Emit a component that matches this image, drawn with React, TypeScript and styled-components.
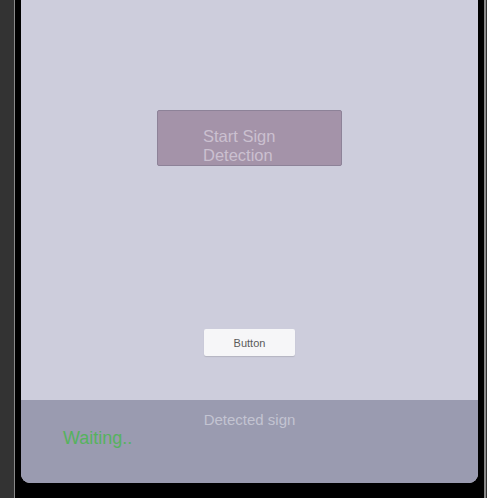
import React from 'react';
import styled, { createGlobalStyle } from 'styled-components';

const GlobalStyle = createGlobalStyle`
  html, body {
    margin: 0;
    padding: 0;
    background: #333333;
    font-family: "Liberation Sans", Arial, sans-serif;
  }
`;

const Page = styled.div`
  width: 487px;
  height: 498px;
  overflow: hidden;
  padding-left: 14px;
  box-sizing: border-box;
`;

const Frame = styled.div`
  width: 472px;
  height: 498px;
  box-sizing: border-box;
  background: #000;
  border-left: 1px solid #8a8a8a;
  border-right: 2px solid #8a8a8a;
  padding: 0 6px;
`;

const Screen = styled.div`
  height: 483px;
  display: flex;
  flex-direction: column;
  border-radius: 0 0 9px 9px;
  overflow: hidden;
  background: #cdcddc;
`;

const Stage = styled.div`
  flex: 0 0 400px;
  display: flex;
  flex-direction: column;
  align-items: center;
  padding-top: 110px;
  box-sizing: border-box;
`;

const StartButton = styled.button`
  width: 185px;
  height: 56px;
  background: #a493a9;
  border: 1px solid #8d8298;
  border-radius: 2px;
  padding: 16px 0 0 45px;
  box-sizing: border-box;
  text-align: left;
  font-family: "Liberation Sans", Arial, sans-serif;
  font-size: 16.5px;
  line-height: 19px;
  color: #cbc0d0;
`;

const SmallButton = styled.button`
  width: 91px;
  height: 27px;
  margin-top: 163px;
  background: #f6f6f8;
  border: none;
  border-radius: 2px;
  box-shadow: 0 1px 1px rgba(0, 0, 0, 0.12);
  font-family: "Liberation Sans", Arial, sans-serif;
  font-size: 11px;
  color: #5a5a5a;
`;

const ResultPanel = styled.div`
  flex: 1;
  background: #9a9bb0;
  display: flex;
  flex-direction: column;
  padding-top: 11px;
  box-sizing: border-box;
`;

const PanelTitle = styled.div`
  text-align: center;
  font-size: 15px;
  line-height: 17px;
  color: #c3c4d2;
`;

const Status = styled.div`
  margin: 0 0 0 42px;
  font-size: 18px;
  line-height: 21px;
  color: #56b25e;
`;

export default function App() {
  return (
    <>
      <GlobalStyle />
      <Page>
        <Frame>
          <Screen>
            <Stage>
              <StartButton>Start Sign<br />Detection</StartButton>
              <SmallButton>Button</SmallButton>
            </Stage>
            <ResultPanel>
              <PanelTitle>Detected sign</PanelTitle>
              <Status>Waiting..</Status>
            </ResultPanel>
          </Screen>
        </Frame>
      </Page>
    </>
  );
}
